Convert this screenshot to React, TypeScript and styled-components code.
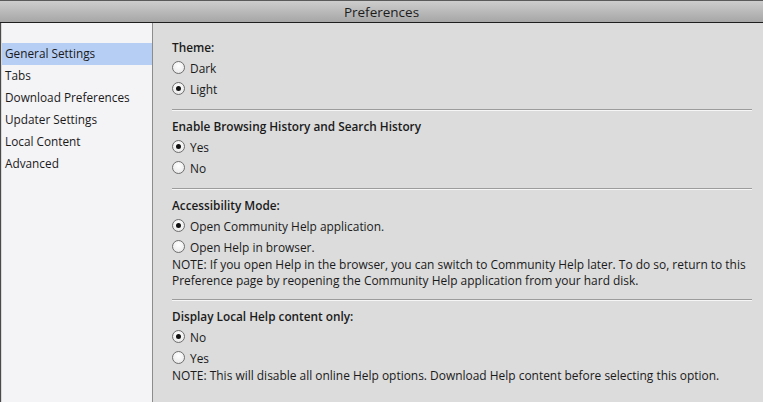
import React, { useState } from "react";
import styled, { createGlobalStyle } from "styled-components";

const GlobalStyle = createGlobalStyle`
    html, body {
        margin: 0;
        padding: 0;
        background: #dcdcdc;
        font-family: "Open Sans", "Liberation Sans", sans-serif;
    }
`

const sidebarItems = [
    "General Settings",
    "Tabs",
    "Download Preferences",
    "Updater Settings",
    "Local Content",
    "Advanced",
]

type SectionData = {
    name: string
    title: string
    options: string[]
    note?: string[]
    initial: number
}

const sections: SectionData[] = [
    { name: "theme", title: "Theme:", options: ["Dark", "Light"], initial: 1 },
    { name: "history", title: "Enable Browsing History and Search History", options: ["Yes", "No"], initial: 0 },
    {
        name: "access",
        title: "Accessibility Mode:",
        options: ["Open Community Help application.", "Open Help in browser."],
        note: [
            "NOTE: If you open Help in the browser, you can switch to Community Help later. To do so, return to this",
            "Preference page by reopening the Community Help application from your hard disk.",
        ],
        initial: 0,
    },
    {
        name: "local",
        title: "Display Local Help content only:",
        options: ["No", "Yes"],
        note: ["NOTE: This will disable all online Help options. Download Help content before selecting this option."],
        initial: 0,
    },
]

export default function App() {
    const [selected, setSelected] = useState(0)
    const [values, setValues] = useState<Record<string, number>>(() => {
        const init: Record<string, number> = {}
        sections.forEach((s) => { init[s.name] = s.initial })
        return init
    })

    return (
        <Window>
            <GlobalStyle />
            <TitleBar>Preferences</TitleBar>
            <Body>
                <Sidebar>
                    {sidebarItems.map((item, index) => (
                        <SideItem key={item} active={index === selected} onClick={() => setSelected(index)}>
                            {item}
                        </SideItem>
                    ))}
                </Sidebar>
                <Content>
                    {sections.map((section, sIndex) => (
                        <Section key={section.name} last={sIndex === sections.length - 1}>
                            <SectionTitle>{section.title}</SectionTitle>
                            {section.options.map((opt, oIndex) => (
                                <Option key={opt} onClick={() => setValues({ ...values, [section.name]: oIndex })}>
                                    <Radio checked={values[section.name] === oIndex} />
                                    {opt}
                                </Option>
                            ))}
                            {section.note && (
                                <Note>
                                    {section.note.map((line) => <div key={line}>{line}</div>)}
                                </Note>
                            )}
                        </Section>
                    ))}
                </Content>
            </Body>
        </Window>
    )
}

const Window = styled.div`
    width: 763px;
    height: 402px;
    display: flex;
    flex-direction: column;
    overflow: hidden;
    background: #dcdcdc;
`

const TitleBar = styled.div`
    height: 21px;
    border-top: 1px solid #5a5a5a;
    border-bottom: 1px solid #1e1e1e;
    background: linear-gradient(#cdcdcd, #a6a6a6);
    display: flex;
    align-items: center;
    justify-content: center;
    font-size: 13.5px;
    color: #1c1c1c;
`

const Body = styled.div`
    flex: 1;
    display: flex;
    border-left: 1px solid #4a4a4a;
`

const Sidebar = styled.div`
    width: 150px;
    background: #f4f3f6;
    border-left: 1px solid #d8d8d8;
    border-right: 1px solid #8c8c8c;
    padding-top: 20px;
`

const SideItem = styled.div<{ active: boolean }>`
    height: 22px;
    line-height: 21px;
    padding-left: 3px;
    font-size: 11.8px;
    color: #1a1a1a;
    background: ${props => props.active ? '#b6cef4' : 'transparent'};
    cursor: default;
`

const Content = styled.div`
    flex: 1;
    padding: 15px 11px 0 19px;
    background: #dcdcdc;
`

const Section = styled.div<{ last: boolean }>`
    padding-bottom: ${props => props.last ? '0' : '10px'};
    margin-bottom: ${props => props.last ? '0' : '7px'};
    border-bottom: ${props => props.last ? 'none' : '1px solid #9c9c9c'};
    box-shadow: ${props => props.last ? 'none' : '0 1px 0 #f6f6f6'};
`

const SectionTitle = styled.div`
    height: 19px;
    line-height: 19px;
    font-size: 11.8px;
    font-weight: 600;
    color: #1a1a1a;
`

const Option = styled.div`
    height: 21px;
    display: flex;
    align-items: center;
    gap: 5px;
    font-size: 11.9px;
    color: #1a1a1a;
    cursor: default;
`

const Radio = styled.span<{ checked: boolean }>`
    width: 11px;
    height: 11px;
    border-radius: 50%;
    border: 1px solid #6e6e6e;
    background: radial-gradient(circle at 50% 35%, #ffffff, #e4e4e4);
    display: flex;
    align-items: center;
    justify-content: center;

    &::after {
        content: "";
        width: 5px;
        height: 5px;
        border-radius: 50%;
        background: #111;
        display: ${props => props.checked ? 'block' : 'none'};
    }
`

const Note = styled.div`
    font-size: 11.95px;
    line-height: 16px;
    color: #1a1a1a;
`
